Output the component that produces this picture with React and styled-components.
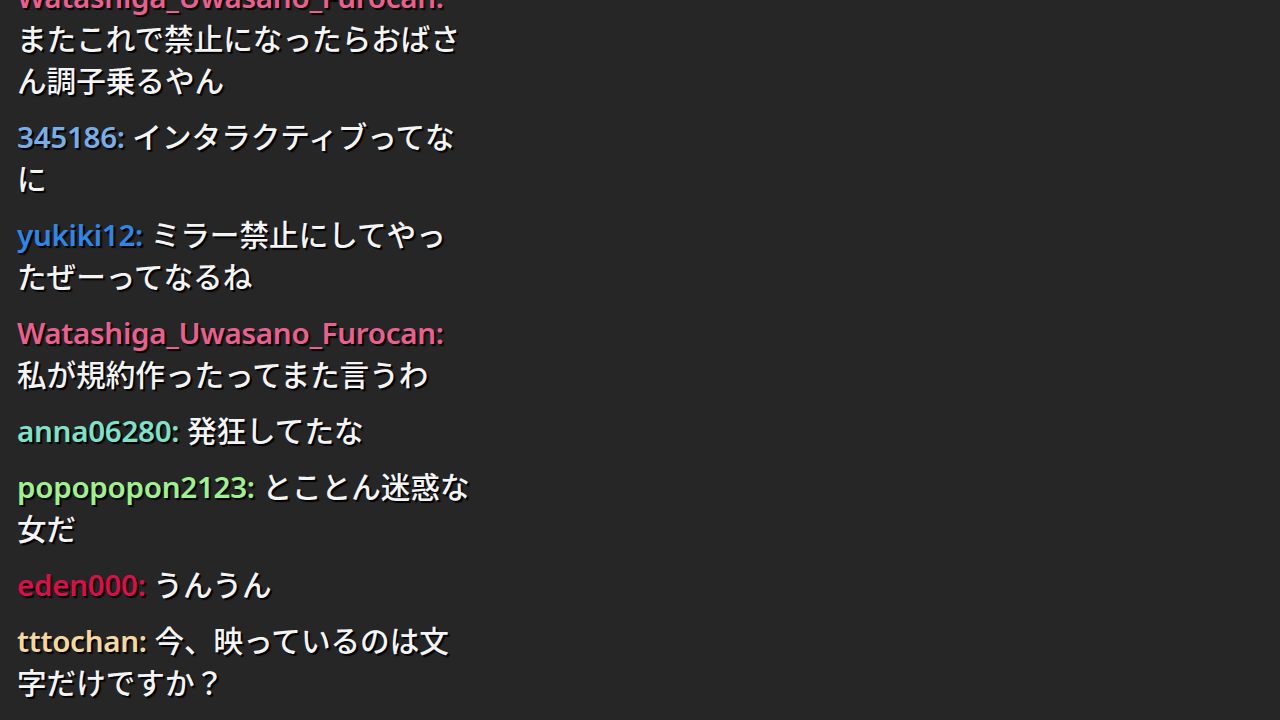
import React from 'react';
import styled, { createGlobalStyle } from 'styled-components';

const GlobalStyle = createGlobalStyle`
  html, body {
    margin: 0;
    padding: 0;
    background: #262626;
  }
  body {
    font-family: "Noto Sans", "Noto Sans CJK JP", sans-serif;
  }
`;

const Screen = styled.div`
  width: 100vw;
  height: 100vh;
  overflow: hidden;
  display: flex;
  flex-direction: column;
  justify-content: flex-end;
  background: #262626;
`;

const ChatList = styled.ul`
  list-style: none;
  margin: 0;
  padding: 0 0 16px 17px;
  width: 456px;
  display: flex;
  flex-direction: column;
  gap: 14px;
`;

const Message = styled.li`
  font-family: "Noto Sans", "Noto Sans CJK JP", sans-serif;
  font-size: 29.6px;
  line-height: 42px;
  font-weight: 500;
  color: #f4f4f4;
  text-shadow: 2px 2px 1px rgba(0, 0, 0, 0.95);
  line-break: strict;
`;

const Name = styled.span`
  color: ${(p) => p.color};
  font-weight: 600;
  letter-spacing: -0.3px;
`;

const messages = [
  { name: 'Watashiga_Uwasano_Furocan', color: '#e8608e', text: 'またこれで禁止になったらおばさん調子乗るやん' },
  { name: '345186', color: '#78aee8', text: 'インタラクティブってなに' },
  { name: 'yukiki12', color: '#2f86e6', text: 'ミラー禁止にしてやったぜーってなるね' },
  { name: 'Watashiga_Uwasano_Furocan', color: '#e8608e', text: '私が規約作ったってまた言うわ' },
  { name: 'anna06280', color: '#80e0c8', text: '発狂してたな' },
  { name: 'popopopon2123', color: '#a0f090', text: 'とことん迷惑な女だ' },
  { name: 'eden000', color: '#d8104a', text: 'うんうん' },
  { name: 'tttochan', color: '#f5d8a0', text: '今、映っているのは文字だけですか？' },
];

export default function App() {
  return (
    <>
      <GlobalStyle />
      <Screen>
        <ChatList>
          {messages.map((m, i) => (
            <Message key={i}>
              <Name color={m.color}>{m.name}:</Name> {m.text}
            </Message>
          ))}
        </ChatList>
      </Screen>
    </>
  );
}
